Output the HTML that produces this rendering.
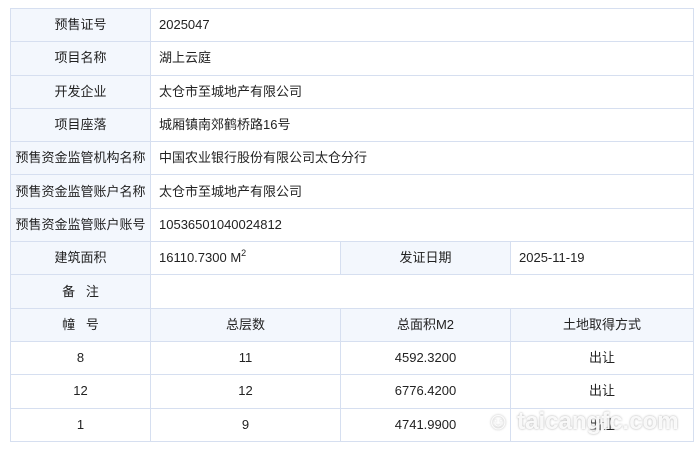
<!DOCTYPE html>
<html><head><meta charset="utf-8"><style>
body{margin:0;background:#fff;font-family:"Liberation Sans","Noto Sans CJK SC",sans-serif;font-size:13px;color:#222}
table{position:absolute;left:10px;top:8px;border-collapse:collapse;table-layout:fixed;width:683px}
tr{height:33.3px}
td{border:1px solid #d6dff0;padding:0 0 0 8px;box-sizing:border-box;line-height:16px}
td.l{background:#f3f7fd;text-align:center;padding:0}
td.c{text-align:center;padding:0}
sup{font-size:9px;line-height:0;vertical-align:6px}
.wm{position:absolute;left:486px;top:408px;white-space:nowrap;color:rgba(255,255,255,.9);font-size:24px;line-height:28px;font-weight:bold;text-shadow:0 0 2px #aaa}
</style></head><body>
<table>
<colgroup><col style="width:140px"><col style="width:190px"><col style="width:170px"><col style="width:183px"></colgroup>
<tr><td class="l">预售证号</td><td colspan="3">2025047</td></tr>
<tr><td class="l">项目名称</td><td colspan="3">湖上云庭</td></tr>
<tr><td class="l">开发企业</td><td colspan="3">太仓市至城地产有限公司</td></tr>
<tr><td class="l">项目座落</td><td colspan="3">城厢镇南郊鹤桥路16号</td></tr>
<tr><td class="l">预售资金监管机构名称</td><td colspan="3">中国农业银行股份有限公司太仓分行</td></tr>
<tr><td class="l">预售资金监管账户名称</td><td colspan="3">太仓市至城地产有限公司</td></tr>
<tr><td class="l">预售资金监管账户账号</td><td colspan="3">10536501040024812</td></tr>
<tr><td class="l">建筑面积</td><td>16110.7300 M<sup>2</sup></td><td class="l">发证日期</td><td>2025-11-19</td></tr>
<tr><td class="l">备&nbsp;&nbsp;&nbsp;注</td><td colspan="3"></td></tr>
<tr><td class="l">幢&nbsp;&nbsp;&nbsp;号</td><td class="l">总层数</td><td class="l">总面积M2</td><td class="l">土地取得方式</td></tr>
<tr><td class="c">8</td><td class="c">11</td><td class="c">4592.3200</td><td class="c">出让</td></tr>
<tr><td class="c">12</td><td class="c">12</td><td class="c">6776.4200</td><td class="c">出让</td></tr>
<tr><td class="c">1</td><td class="c">9</td><td class="c">4741.9900</td><td class="c">出让</td></tr>
</table>
<div class="wm">☺ taicangfc.com</div>
</body></html>
